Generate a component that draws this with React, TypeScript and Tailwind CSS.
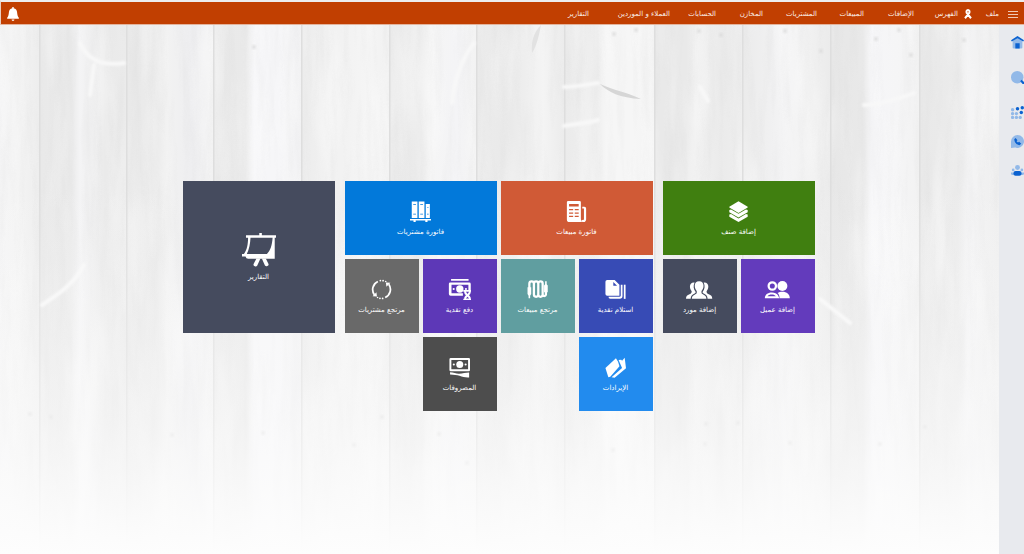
import React from 'react';
import clsx from 'clsx';

interface IconProps {
  className?: string;
}

type IconType = React.FC<IconProps>;

interface TileData {
  label: string;
  icon: IconType;
  className: string;
  big?: boolean;
}

const Svg: React.FC<IconProps & { children: React.ReactNode }> = ({ className, children }) => (
  <svg viewBox="0 0 24 24" fill="currentColor" className={className} aria-hidden="true">
    {children}
  </svg>
);

const LayersIcon: IconType = (props) => (
  <Svg {...props}>
    <path d="M12 .4 22.500 6.500v1L12 13.600 1.500 7.500v-1z" />
    <path d="M1.500 10.200 3.500 9.600 12 14.700l8.500-5.100 2 .6v2.600L12 18.900 1.500 12.800z" />
    <path d="M1.500 15.400l2-.6L12 19.900l8.500-5.100 2 .6V18L12 24 1.500 18z" />
  </Svg>
);

const InvoiceIcon: IconType = (props) => (
  <Svg {...props}>
    <path
      fillRule="evenodd"
      d="M2.500 0h13A1.500 1.500 0 0 1 17 1.500V20c0 1.600.5 3 1.500 4H4a3 3 0 0 1-3-3V1.500A1.500 1.500 0 0 1 2.500 0zM3.500 3.500v2.700h11V3.500zM3.500 9.200v1.500h4.700V9.200zM10 9.200v1.500h4.500V9.200zM3.500 13v1.500h4.700V13zM10 13v1.500h4.500V13zM3.500 16.800v1.500h4.700v-1.500zM10 16.800v1.500h4.500v-1.500z"
    />
    <path d="M18.600 6.500H21a2 2 0 0 1 2 2V21a3 3 0 0 1-3.500 3c-1 0-1.700-.8-2-1.800l2-.7c.6.4 1 0 1-.7V8.500h-1.900z" />
  </Svg>
);

const BooksIcon: IconType = (props) => (
  <Svg {...props}>
    <path fillRule="evenodd" d="M2 .5h6.500v19H2zM3.700 3.500v.8h3.100v-.8zM3.700 14.500v.8h3.100v-.8z" />
    <path fillRule="evenodd" d="M10 .5h6.500v19H10zM11.700 3.500v.8h3.100v-.8zM11.700 14.500v.8h3.100v-.8z" />
    <path fillRule="evenodd" d="M18 3.500h4.700v16H18zM19.400 7v.8h1.900V7zM19.400 14.500v.8h1.900v-.8z" />
    <path d="M0 20.700h24v1.500h-4V24h-2.500v-1.800h-11V24H4v-1.800H0z" />
  </Svg>
);

const CustomerIcon: IconType = (props) => (
  <svg viewBox="0 0 30 24" fill="currentColor" className={props.className} aria-hidden="true">
    <circle cx="9.500" cy="8" r="4.200" fill="none" stroke="currentColor" strokeWidth="2.600" />
    <circle cx="21" cy="8" r="5.700" />
    <path fillRule="evenodd" d="M1 22c0-4 3-6.600 8-6.600 3.200 0 5.500 1.200 7 3.200L17.500 22zM4 19.800h9.500c-1-1.400-2.500-2-4.500-2-2.500 0-4.200.7-5 2z" />
    <path d="M15.500 16c1.500-.9 3.400-1.300 5.500-1.300 5 0 8.500 3 8.500 7.300H17.700c.2-2.400-.6-4.500-2.200-6z" />
  </svg>
);

const SuppliersIcon: IconType = (props) => (
  <svg viewBox="0 0 30 24" fill="currentColor" className={props.className} aria-hidden="true">
    <path d="M9 4c-3 0-4.500 2-4.500 4.700 0 2.500 1 4.300 2 5.300 0 2-.5 2.500-2.500 3.300-2.500 1-4 2-4 5.200h5.300c.2-3.700 2-5 5-6.300.8-.4 1-.8.6-1.500C8.500 11.500 8 8 9.800 4z" />
    <path d="M21 4c3 0 4.500 2 4.500 4.700 0 2.500-1 4.300-2 5.300 0 2 .5 2.500 2.500 3.300 2.500 1 4 2 4 5.200h-5.300c-.2-3.700-2-5-5-6.300-.8-.4-1-.8-.6-1.500 2.400-3.200 2.900-6.700 1.100-10.700z" />
    <path d="M15 2.500c-3.400 0-5 2.300-5 5.300 0 2.700 1.100 4.800 2.300 6v2c0 .9-.8 1.300-2 1.900-2 .9-3.500 1.900-3.600 4.800h16.600c-.1-2.900-1.600-3.900-3.600-4.800-1.200-.6-2-1-2-1.900v-2c1.200-1.200 2.300-3.300 2.300-6 0-3-1.600-5.300-5-5.300z" />
  </svg>
);

const DocsIcon: IconType = (props) => (
  <Svg {...props}>
    <path fillRule="evenodd" d="M2.500 1h8.500l5.500 5.500V19h-14A2 2 0 0 1 .5 17V3a2 2 0 0 1 2-2zM9.500 3.500v4.300h4.300z" />
    <path d="M4 20.300h12.500a1.500 1.500 0 0 0 1.500-1.500V6.500h2v13a3.200 3.200 0 0 1-3.200 3.200H6a2.400 2.400 0 0 1-2-2.400z" />
    <path d="M21.500 6.500h2v16.200h-2z" />
  </Svg>
);

const CableIcon: IconType = (props) => (
  <Svg {...props}>
    <path
      d="M2.700 11V5.300a2.600 2.600 0 0 1 5.200 0v12.500a2.500 2.500 0 0 0 5 0V5.300a2.500 2.500 0 0 1 5 0M17.900 5v13a1.900 1.900 0 0 0 3.700 0v-6M7.900 5.300a2.500 2.500 0 0 1 5 0M12.900 17.800a2.500 2.500 0 0 0 5 0"
      fill="none"
      stroke="currentColor"
      strokeWidth="2.600"
    />
    <path d="M.6 9.500h4.200v7.500L3.600 19v3H1.800v-3L.6 17zM19.500 7.500 20.700 6V2.500h1.800V6l1.200 1.500V15h-4.200z" />
  </Svg>
);

const PaymentIcon: IconType = (props) => (
  <svg viewBox="0 0 27 24" fill="currentColor" className={props.className} aria-hidden="true">
    <path d="M3.500 0h20v2h-20z" />
    <path fillRule="evenodd" d="M2.500 4h21.800A1.700 1.700 0 0 1 26 5.700V13h-2.700V6.600H4v9.600h13V19H3a2 2 0 0 1-2-2V5.500A1.500 1.500 0 0 1 2.500 4z" />
    <circle cx="13.500" cy="11.400" r="4.200" />
    <circle cx="6.500" cy="11.400" r="1.200" />
    <circle cx="20.500" cy="11.400" r="1.200" />
    <path fillRule="evenodd" d="M17.500 12.500H27v2h-1c0 2-.8 3.100-2 4 1.200.9 2 2 2 4h1V24h-9.500v-1.500h1c0-2 .8-3.100 2-4-1.200-.9-2-2-2-4h-1zM20.500 14.700h3.600l-1.800 2.300zM22.300 20.200l-1.800 2.200h3.600z" />
  </svg>
);

const RefreshIcon: IconType = (props) => (
  <Svg {...props}>
    <path d="M7.800 2.800A10.200 10.200 0 0 0 4 18.200M16.200 21.200A10.200 10.200 0 0 0 20.300 6" fill="none" stroke="currentColor" strokeWidth="2" />
    <path d="M1.800 19.800 6.800 20l-.6-4.800zM22.200 4.200 17 4l.6 4.900z" />
    <circle cx="10.700" cy="1.800" r="1" />
    <circle cx="13.800" cy="1.900" r="1" />
    <circle cx="16.800" cy="2.900" r=".9" />
    <circle cx="13.300" cy="22.200" r="1" />
    <circle cx="10.200" cy="22.100" r="1" />
    <circle cx="7.500" cy="21.200" r=".9" />
  </Svg>
);

const ReceiptsIcon: IconType = (props) => (
  <Svg {...props}>
    <path d="M.5 12.500 12.500 1.500l2.300 3.700 1.700 5.300L6 22.500 3.800 23z" />
    <path d="M15.500 3.500 18.500 3l1 1.200L22.500.8l1.500 12L11 23.800l-3.500-.6L19.500 12.500z" />
  </Svg>
);

const ExpensesIcon: IconType = (props) => (
  <Svg {...props}>
    <path fillRule="evenodd" d="M2 1h20.500A1.500 1.500 0 0 1 24 2.500v12.300a1.500 1.500 0 0 1-1.500 1.500H2a1.500 1.500 0 0 1-1.500-1.500V2.500A1.500 1.500 0 0 1 2 1zM2.700 3.300V14h19.100V3.300z" />
    <circle cx="12.300" cy="8.600" r="4" />
    <circle cx="5.500" cy="8.600" r="1.200" />
    <circle cx="19" cy="8.600" r="1.200" />
    <path d="M1.200 17.500c4 .2 7 1.800 10.300 1.700 4-.1 7.500-1.300 11.500-1.400v5.500c-4.500.3-7.300-.8-11-1.900-3-.8-6.500-1.200-10.800-1.400z" />
  </Svg>
);

const BoardIcon: IconType = (props) => (
  <Svg {...props}>
    <path d="M12.200 0h1.800v1.600h10V3.400h-.9v14.700H4.400a2 2 0 0 1-1.900-1.600H0v-1.700h1.400C3.600 12 4.200 8 4.300 3.400H2.800V1.600h9.400zM6 3.400c-.2 4-.9 8.200-2.600 11.400h14.200c2.500-2.300 3.600-6 4-11.400z" fillRule="evenodd" />
    <path d="M10.200 18h2.800l-2.200 5a1.500 1.500 0 0 1-2.700-1zM14 18h2.800l2 4a1.500 1.500 0 0 1-2.600 1z" />
  </Svg>
);

const BellIcon: IconType = (props) => (
  <Svg {...props}>
    <path d="M10.800 0h2.400v2.200c3.600.5 5.400 3 5.800 6.600.4 4.400 1 6.700 3 9.700v1.800H2v-1.800C4 15.500 4.600 13.200 5 8.800c.4-3.600 2.200-6.100 5.800-6.600zM9.500 21.300h5a2.500 2.500 0 0 1-5 0z" />
  </Svg>
);

const RibbonIcon: IconType = (props) => (
  <svg viewBox="0 0 16 20" fill="none" stroke="currentColor" strokeWidth="4" className={props.className} aria-hidden="true">
    <path d="M2 18.500 10.500 8C12 5 10.500 2 8 2S4 5 5.500 8L14 18.500" />
  </svg>
);

// two-tone sidebar icons
const HomeIcon: IconType = (props) => (
  <Svg {...props}>
    <path d="M3 9 12 3.500 21 9v12a2 2 0 0 1-2 2H5a2 2 0 0 1-2-2z" className="text-[#92b9e8]" />
    <path d="M0 8 12 0l12 8-1.500 2.300L12 4.300 1.500 10.300zM8 13.500h8V23H8z" className="text-[#0b62d0]" />
  </Svg>
);

const SearchIcon: IconType = (props) => (
  <Svg {...props}>
    <circle cx="11.500" cy="11.500" r="11.500" className="text-[#92b9e8]" />
    <path d="m17 19 2.500-3 4.500 4.500V24h-2.500z" className="text-[#0b62d0]" />
  </Svg>
);

const GridIcon: IconType = (props) => (
  <Svg {...props}>
    <g className="text-[#92b9e8]">
      <circle cx="3" cy="7" r="3.100" />
      <circle cx="3" cy="14" r="3.100" />
      <circle cx="10" cy="14" r="3.100" />
      <circle cx="3" cy="21" r="3.100" />
      <circle cx="10" cy="21" r="3.100" />
      <circle cx="17" cy="21" r="3.100" />
    </g>
    <g className="text-[#0b62d0]">
      <circle cx="12" cy="5" r="3.200" />
      <circle cx="20.800" cy="3.200" r="3.200" />
      <circle cx="19" cy="12" r="3.200" />
    </g>
  </Svg>
);

const WhatsappIcon: IconType = (props) => (
  <Svg {...props}>
    <path d="M12 0a12 12 0 1 1-4 23.300L0 24V12A12 12 0 0 1 12 0z" className="text-[#92b9e8]" />
    <path d="M8.500 5.500 6 8c.5 6 4 10 9.500 11l3.500-3-4-3.500-2 1.500c-1.500-.7-2.300-1.600-2.700-3l1.700-1.500z" className="text-[#0b62d0]" />
  </Svg>
);

const TeamIcon: IconType = (props) => (
  <Svg {...props}>
    <g className="text-[#92b9e8]">
      <circle cx="12" cy="6.500" r="4.500" />
      <circle cx="4" cy="11" r="2.500" />
      <circle cx="20" cy="11" r="2.500" />
      <path d="M0 15.500h24v3.500l-2 1.500H2L0 19z" />
    </g>
    <rect x="4.500" y="13" width="15" height="8.500" rx="4" className="text-[#0b62d0]" />
  </Svg>
);

const MENU: { label: string; className: string; icon?: IconType }[] = [
  { label: 'ملف', className: 'w-[27px]' },
  { label: 'الفهرس', className: 'w-[58px]', icon: RibbonIcon },
  { label: 'الإضافات', className: 'w-[50px]' },
  { label: 'المبيعات', className: 'w-[47px]' },
  { label: 'المشتريات', className: 'w-[54px]' },
  { label: 'المخازن', className: 'w-[47px]' },
  { label: 'الحسابات', className: 'w-[46px]' },
  { label: 'العملاء و الموردين', className: 'w-[81px]' },
  { label: 'التقارير', className: 'w-[40px]' },
];

const SIDEBAR: { label: string; icon: IconType; className: string }[] = [
  { label: 'الرئيسية', icon: HomeIcon, className: 'mb-[22px]' },
  { label: 'بحث', icon: SearchIcon, className: 'mb-[22px]' },
  { label: 'التطبيقات', icon: GridIcon, className: 'mb-4' },
  { label: 'واتساب', icon: WhatsappIcon, className: 'mb-4' },
  { label: 'المستخدمين', icon: TeamIcon, className: '' },
];

const ITEM_TILES: TileData[] = [
  { label: 'إضافة صنف', icon: LayersIcon, className: 'col-span-2 bg-[#407f10]' },
  { label: 'إضافة عميل', icon: CustomerIcon, className: 'bg-[#633bbc]' },
  { label: 'إضافة مورد', icon: SuppliersIcon, className: 'bg-[#454b5e]' },
];

const INVOICE_TILES: TileData[] = [
  { label: 'فاتورة مبيعات', icon: InvoiceIcon, className: 'col-span-2 bg-[#d05a36]' },
  { label: 'فاتورة مشتريات', icon: BooksIcon, className: 'col-span-2 bg-[#0279da]' },
  { label: 'استلام نقدية', icon: DocsIcon, className: 'bg-[#374bb5]' },
  { label: 'مرتجع مبيعات', icon: CableIcon, className: 'bg-[#609ea0]' },
  { label: 'دفع نقدية', icon: PaymentIcon, className: 'bg-[#5d38b7]' },
  { label: 'مرتجع مشتريات', icon: RefreshIcon, className: 'bg-[#696969]' },
  { label: 'الإيرادات', icon: ReceiptsIcon, className: 'bg-[#228bee]' },
  { label: 'المصروفات', icon: ExpensesIcon, className: 'col-start-3 bg-[#4d4d4d]' },
];

const REPORT_TILE: TileData = { label: 'التقارير', icon: BoardIcon, className: 'size-[152px] bg-[#454b5e]', big: true };

// left edge, width and the five shades across each plank
const PLANKS: [number, number, string[]][] = [
  [-48, 88, ['#eeeeee', '#f2f2f3', '#f5f5f6', '#f4f4f4', '#ededed']],
  [40, 87, ['#e9e9e9', '#eaeaea', '#f4f4f5', '#eaeaea', '#ebebeb']],
  [127, 87, ['#e9e9e9', '#ebebeb', '#f2f2f2', '#eeeef0', '#f2f2f2']],
  [214, 88, ['#eaeaea', '#e9e9e9', '#f6f6f8', '#f6f6f8', '#f1f1f2']],
  [302, 88, ['#ececec', '#f2f2f2', '#f2f2f2', '#f5f5f5', '#f1f1f1']],
  [390, 87, ['#eaeaea', '#ebebeb', '#f5f5f5', '#f4f4f6', '#f3f3f3']],
  [477, 88, ['#ececec', '#e9e9e9', '#ececec', '#f4f4f4', '#ebebeb']],
  [565, 90, ['#ebebeb', '#efefef', '#f6f6f6', '#f6f6f6', '#f4f4f4']],
  [655, 88, ['#e9e9e9', '#e9e9e9', '#f1f1f1', '#ebebeb', '#eeeeee']],
  [743, 88, ['#ebebeb', '#f1f1f2', '#f4f4f5', '#f1f1f1', '#ebebeb']],
  [831, 89, ['#e7e7e7', '#e9e9e9', '#f6f6f8', '#f5f5f6', '#f2f2f2']],
  [920, 104, ['#e9e9e9', '#ebebeb', '#f3f3f4', '#efefef', '#f2f2f2']],
];

const KNOTS: [number, number][] = [
  [876, 14], [899, 5], [911, 30], [964, 15], [821, 26], [785, 6], [614, 9], [636, 5], [699, 6], [721, 10],
  [254, 22], [30, 389], [51, 392], [172, 410], [263, 408], [354, 420], [382, 392], [439, 409], [467, 438],
  [613, 425], [706, 399], [738, 398], [790, 418], [705, 419], [880, 419], [925, 402],
];

const WoodBackground: React.FC = () => (
  <svg viewBox="0 0 999 529" preserveAspectRatio="none" className="absolute inset-0 h-full w-full" aria-hidden="true">
    <defs>
      <filter id="grain" x="0" y="0" width="100%" height="100%">
        <feTurbulence type="fractalNoise" baseFrequency="0.12 0.012" numOctaves="3" seed="7" />
        <feColorMatrix values="0 0 0 0 0.55  0 0 0 0 0.55  0 0 0 0 0.55  0.7 0 0 0 -0.3" />
      </filter>
      <filter id="sheen" x="0" y="0" width="100%" height="100%">
        <feTurbulence type="fractalNoise" baseFrequency="0.03 0.007" numOctaves="3" seed="21" />
        <feColorMatrix values="0 0 0 0 1  0 0 0 0 1  0 0 0 0 1  3 0 0 0 -1.4" />
      </filter>
      <filter id="soft">
        <feGaussianBlur stdDeviation="1.2" />
      </filter>
      <linearGradient id="fade" x1="0" y1="0" x2="0" y2="1">
        <stop offset="0.3" stopColor="#fcfcfc" stopOpacity="0" />
        <stop offset="0.75" stopColor="#fcfcfc" stopOpacity="0.5" />
        <stop offset="1" stopColor="#fdfdfd" stopOpacity="1" />
      </linearGradient>
      {PLANKS.map(([x, , shades]) => (
        <linearGradient key={x} id={`plank${x}`}>
          {shades.map((shade, i) => (
            <stop key={i} offset={[0, 0.36, 0.46, 0.75, 1][i]} stopColor={shade} />
          ))}
        </linearGradient>
      ))}
    </defs>
    {PLANKS.map(([x, width]) => (
      <rect key={x} x={x} y="0" width={width} height="529" fill={`url(#plank${x})`} />
    ))}
    <rect width="999" height="529" filter="url(#sheen)" opacity="0.35" />
    <rect width="999" height="529" filter="url(#grain)" opacity="0.35" />
    {PLANKS.map(([x]) => (
      <rect key={x} x={x - 1} y="0" width="1.500" height="529" fill="#dedede" />
    ))}
    <g fill="none" stroke="#f8f8f8" strokeWidth="4" strokeLinecap="round" filter="url(#soft)">
      <path d="M80 18c6 14 18 24 44 20M94 40l-4 30" />
      <path d="M474 18c-12 15-20 38-22 60M598 58c-14 2-24 4-34 4M598 95c-14 4-24 4-34 6" />
      <path d="M864 80c14 0 34-6 50-12M700 62l8 14M820 274l30 24" />
      <path d="M84 240c-12 22-28 30-42 40" />
    </g>
    <path d="M541 0c-8 8-10 18-9 28 5-8 7-18 9-28z" fill="#e2e2e2" />
    <path d="M600 59c8 8 20 14 41 15-14-7-26-8-41-15z" fill="#d6d6d6" />
    {KNOTS.map(([cx, cy]) => (
      <ellipse key={`${cx}-${cy}`} cx={cx} cy={cy} rx="2" ry="2.200" fill="#d8d8d8" opacity="0.7" filter="url(#soft)" />
    ))}
    <rect width="999" height="529" fill="url(#fade)" />
  </svg>
);

const Tile: React.FC<{ tile: TileData }> = ({ tile }) => {
  const Icon = tile.icon;
  return (
    <button
      type="button"
      className={clsx(
        'flex flex-col items-center justify-center gap-1 pt-[2px] text-white hover:brightness-110',
        tile.className
      )}
    >
      <Icon className={tile.big ? 'h-[34px]' : 'h-[21px]'} />
      <span className="text-[7px] leading-3 whitespace-nowrap">{tile.label}</span>
    </button>
  );
};

export default function App() {
  return (
    <div dir="rtl" className="flex min-h-screen flex-col bg-white font-['DejaVu_Sans',sans-serif]">
      <header className="flex h-[25px] items-center border-t-2 border-b border-l border-t-[#ededee] border-b-[#e3b49d] border-l-[#e9cfc2] bg-[#c13f01] pt-[2px] pr-[6px] pl-[5px] text-[#fbeee7]">
        <button type="button" aria-label="القائمة" className="ml-[9px] flex w-[10px] flex-col gap-[2px]">
          <span className="h-px w-full bg-[#f0c9b5]" />
          <span className="h-px w-full bg-[#f0c9b5]" />
          <span className="h-px w-full bg-[#f0c9b5]" />
        </button>
        <nav className="flex">
          {MENU.map(({ label, className, icon: Icon }) => (
            <button
              key={label}
              type="button"
              className={clsx('flex shrink-0 items-center gap-[6px] text-[7px] leading-3 whitespace-nowrap', className)}
            >
              {Icon && <Icon className="h-[10px] w-2 text-white" />}
              {label}
            </button>
          ))}
        </nav>
        <button type="button" aria-label="الإشعارات" className="mr-auto text-white">
          <BellIcon className="size-[14px]" />
        </button>
      </header>

      <div className="flex grow">
        <aside className="flex w-[25px] shrink-0 flex-col items-end bg-[#e8eaee] pt-[11px] pl-px">
          {SIDEBAR.map(({ label, icon: Icon, className }) => (
            <button key={label} type="button" aria-label={label} className={clsx('ml-auto', className)}>
              <Icon className="size-[13px]" />
            </button>
          ))}
        </aside>

        <main className="relative grow overflow-hidden">
          <WoodBackground />
          <div className="relative flex items-start justify-center gap-[10px] pt-[156px] pr-[2px]">
            <section className="grid auto-rows-[74px] grid-cols-[repeat(2,74px)] gap-1">
              {ITEM_TILES.map((tile) => (
                <Tile key={tile.label} tile={tile} />
              ))}
            </section>
            <section className="grid auto-rows-[74px] grid-cols-[repeat(4,74px)] gap-1">
              {INVOICE_TILES.map((tile) => (
                <Tile key={tile.label} tile={tile} />
              ))}
            </section>
            <Tile tile={REPORT_TILE} />
          </div>
        </main>
      </div>
    </div>
  );
}
